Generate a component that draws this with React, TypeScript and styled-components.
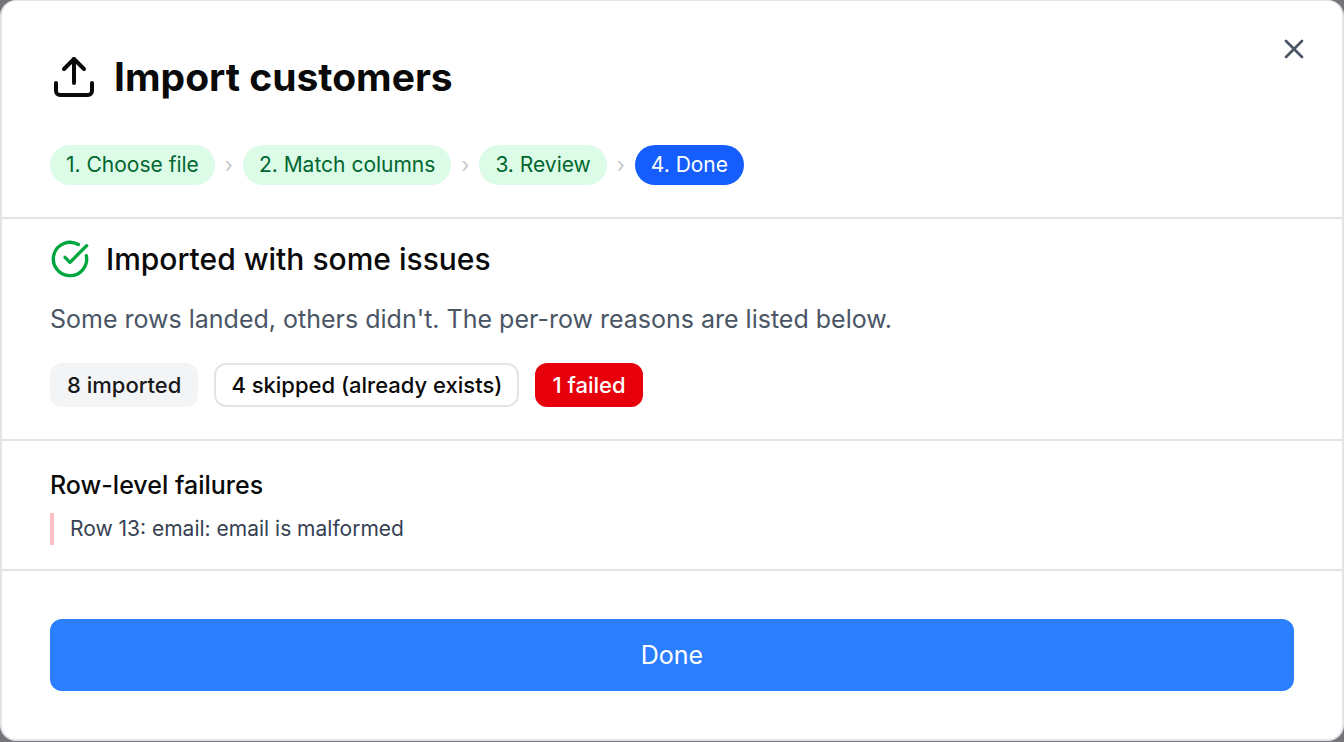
import React from "react";
import styled, { createGlobalStyle, css } from "styled-components";
import { CircleCheckBig, Upload, X } from "lucide-react";

const line = "#e4e4e7";

const GlobalStyle = createGlobalStyle`
  *, *::before, *::after { box-sizing: border-box; }
  body {
    margin: 0;
    font-family: Inter, "Liberation Sans", sans-serif;
    color: #0a0a0a;
  }
  h2, h3, h4, p, ol, ul { margin: 0; padding: 0; }
`;

const Backdrop = styled.div`
  min-height: 100vh;
  background: #74757b;
`;

const Dialog = styled.section`
  position: relative;
  display: flex;
  flex-direction: column;
  background: #fff;
  border: 2px solid ${line};
  border-top-width: 1px;
  border-radius: 16px;
`;

const CloseButton = styled.button`
  position: absolute;
  top: 32px;
  right: 32px;
  display: flex;
  padding: 0;
  border: 0;
  background: none;
  color: #4a5565;
  cursor: pointer;
`;

const Header = styled.header`
  display: flex;
  flex-direction: column;
  gap: 40px;
  padding: 48px 48px 32px;
  border-bottom: 2px solid ${line};
`;

const TitleRow = styled.div`
  display: flex;
  align-items: center;
  gap: 16px;
`;

const Title = styled.h2`
  font-size: 39px;
  font-weight: 700;
  line-height: 56px;
`;

const Steps = styled.ol`
  display: flex;
  flex-wrap: wrap;
  align-items: center;
  list-style: none;
`;

const Step = styled.li<{ $current?: boolean }>`
  display: flex;
  align-items: center;
  font-size: 21px;
  line-height: 40px;

  & > span {
    padding: 0 16px;
    border-radius: 20px;
    background: ${(p) => (p.$current ? "#155dfc" : "#dcfce7")};
    color: ${(p) => (p.$current ? "#fff" : "#016630")};
  }

  &:not(:last-child)::after {
    content: "›";
    width: 28px;
    text-align: center;
    color: #c8c8cc;
  }
`;

const Summary = styled.div`
  display: flex;
  flex-direction: column;
  gap: 20px;
  padding: 20px 48px 32px;
  border-bottom: 2px solid ${line};
`;

const Outcome = styled.div`
  display: flex;
  align-items: center;
  gap: 16px;
  color: #00a63e;
`;

const OutcomeTitle = styled.h3`
  font-size: 30px;
  font-weight: 500;
  line-height: 40px;
  color: #0a0a0a;
`;

const Description = styled.p`
  font-size: 25px;
  line-height: 40px;
  color: #4a5565;
`;

const Badges = styled.div`
  display: flex;
  flex-wrap: wrap;
  gap: 16px;
  padding-top: 4px;
`;

const tones = {
  muted: css`
    background: #f3f4f6;
    border-color: #f3f4f6;
    color: #18181b;
  `,
  outline: css`
    background: #fff;
    border-color: ${line};
  `,
  danger: css`
    background: #e7000b;
    border-color: #e7000b;
    color: #fff;
  `,
};

const Badge = styled.span<{ $tone: keyof typeof tones }>`
  padding: 0 15px;
  border: 2px solid;
  border-radius: 12px;
  font-size: 22px;
  font-weight: 500;
  line-height: 40px;
  ${(p) => tones[p.$tone]}
`;

const Failures = styled.div`
  display: flex;
  flex-direction: column;
  gap: 8px;
  padding: 24px 48px;
  border-bottom: 2px solid ${line};
`;

const FailuresTitle = styled.h4`
  font-size: 25px;
  font-weight: 500;
  line-height: 40px;
`;

const FailureList = styled.ul`
  list-style: none;
`;

const Failure = styled.li`
  padding-left: 16px;
  border-left: 4px solid #ffc0c3;
  font-size: 21px;
  line-height: 32px;
  color: #364153;
`;

const Footer = styled.footer`
  display: flex;
  padding: 48px;
`;

const DoneButton = styled.button`
  flex: 1;
  height: 72px;
  border: 0;
  border-radius: 12px;
  background: #2b7fff;
  color: #fff;
  font-family: inherit;
  font-size: 25px;
  line-height: 40px;
  cursor: pointer;
`;

const steps = ["1. Choose file", "2. Match columns", "3. Review", "4. Done"];

export default function App() {
  return (
    <Backdrop>
      <GlobalStyle />
      <Dialog role="dialog" aria-labelledby="import-title">
        <Header>
          <TitleRow>
            <Upload size={48} />
            <Title id="import-title">Import customers</Title>
          </TitleRow>
          <Steps>
            {steps.map((label, i) => (
              <Step key={label} $current={i === steps.length - 1}>
                <span>{label}</span>
              </Step>
            ))}
          </Steps>
        </Header>
        <Summary>
          <Outcome>
            <CircleCheckBig size={40} />
            <OutcomeTitle>Imported with some issues</OutcomeTitle>
          </Outcome>
          <Description>
            Some rows landed, others didn't. The per-row reasons are listed below.
          </Description>
          <Badges>
            <Badge $tone="muted">8 imported</Badge>
            <Badge $tone="outline">4 skipped (already exists)</Badge>
            <Badge $tone="danger">1 failed</Badge>
          </Badges>
        </Summary>
        <Failures>
          <FailuresTitle>Row-level failures</FailuresTitle>
          <FailureList>
            <Failure>Row 13: email: email is malformed</Failure>
          </FailureList>
        </Failures>
        <Footer>
          <DoneButton type="button">Done</DoneButton>
        </Footer>
        <CloseButton type="button" aria-label="Close">
          <X size={32} />
        </CloseButton>
      </Dialog>
    </Backdrop>
  );
}
